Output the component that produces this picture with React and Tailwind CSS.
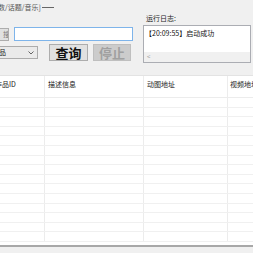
import React from 'react';

const cols = [
  { label: '作品ID', w: 'w-[50px]', pad: 'pl-[0px]' },
  { label: '描述信息', w: 'w-[99px]', pad: 'pl-[3px]' },
  { label: '动图地址', w: 'w-[84px]', pad: 'pl-[3px]' },
  { label: '视频地址', w: 'w-[60px]', pad: 'pl-[2px]' },
];

const rows = Array.from({ length: 15 });

export default function App() {
  return (
    <div
      className="w-[253px] h-[253px] overflow-hidden bg-[#f0f0f0] text-[7px] leading-none text-[#111] flex flex-col"
      style={{ fontFamily: '"Noto Sans CJK SC", "Noto Sans", sans-serif' }}
    >
      {/* Top controls */}
      <div className="h-[75px] flex shrink-0">
        {/* Left column */}
        <div className="w-[143px] flex flex-col">
          <div className="h-[27px] pt-[4px] -ml-[2px] text-[#555] whitespace-nowrap flex items-start">
            <span>数/话题/音乐]</span>
            <span className="mt-[3px] ml-[1px] w-[12px] h-px bg-[#666]"></span>
          </div>
          <div className="flex items-start gap-[5px]">
            <div className="w-[9px] h-[13px] mt-[1px] bg-[#e1e1e1] border border-[#adadad] border-l-0 flex items-center justify-end pr-[1px] text-[#777] overflow-hidden">
              <span className="-mr-[3px]">搜</span>
            </div>
            <div className="w-[119px] h-[14px] bg-white border border-[#7eb4ea]"></div>
          </div>
          <div className="flex items-start mt-[3px]">
            <div className="w-[38px] h-[13px] mt-[2px] bg-[#eaeaea] border border-[#acacac] border-l-0 flex items-center justify-between pr-[3px]">
              <span className="-ml-[1px] text-[#222]">品</span>
              <svg width="6" height="4" viewBox="0 0 6 4">
                <path d="M0.5 0.5 L3 3 L5.5 0.5" fill="none" stroke="#555" strokeWidth="0.9" />
              </svg>
            </div>
            <div className="ml-[11px] w-[39px] h-[17px] bg-[#e1e1e1] border border-[#adadad] flex items-center justify-center text-[13px] font-bold text-[#111]">
              查询
            </div>
            <div className="ml-[5px] w-[38px] h-[17px] bg-[#cccccc] border border-[#bfbfbf] flex items-center justify-center text-[13px] font-bold text-[#a0a0a0]">
              停止
            </div>
          </div>
        </div>
        {/* Right column: log */}
        <div className="flex-1 flex flex-col pr-[2px]">
          <div className="h-[25px] pt-[15px] pl-[3px] text-[#222]">运行日志:</div>
          <div className="h-[38px] bg-white border border-[#abadb3] flex flex-col">
            <div className="flex-1 pt-[4px] pl-[1px] whitespace-nowrap text-[#111]">【20:09:55】启动成功</div>
            <div className="h-[10px] bg-[#f0f0f0] flex items-center pl-[3px] text-[#999] text-[6px]">&lt;</div>
          </div>
        </div>
      </div>

      {/* Table */}
      <div className="h-[172px] shrink-0 bg-white border-t border-[#e3e3e3] border-b-2 border-b-[#a8a8a8] overflow-hidden flex flex-col -ml-[5px]">
        <div className="h-[22px] flex shrink-0 border-b border-[#ececec]">
          {cols.map((c, i) => (
            <div
              key={i}
              className={`${c.w} ${c.pad} shrink-0 pt-[5px] border-r border-[#ececec] whitespace-nowrap text-[#222]`}
            >
              {c.label}
            </div>
          ))}
        </div>
        {rows.map((_, r) => (
          <div key={r} className="h-[9.6px] flex shrink-0 border-b border-[#f0f0f0]">
            {cols.map((c, i) => (
              <div key={i} className={`${c.w} shrink-0 border-r border-[#ececec]`}></div>
            ))}
          </div>
        ))}
      </div>
    </div>
  );
}
